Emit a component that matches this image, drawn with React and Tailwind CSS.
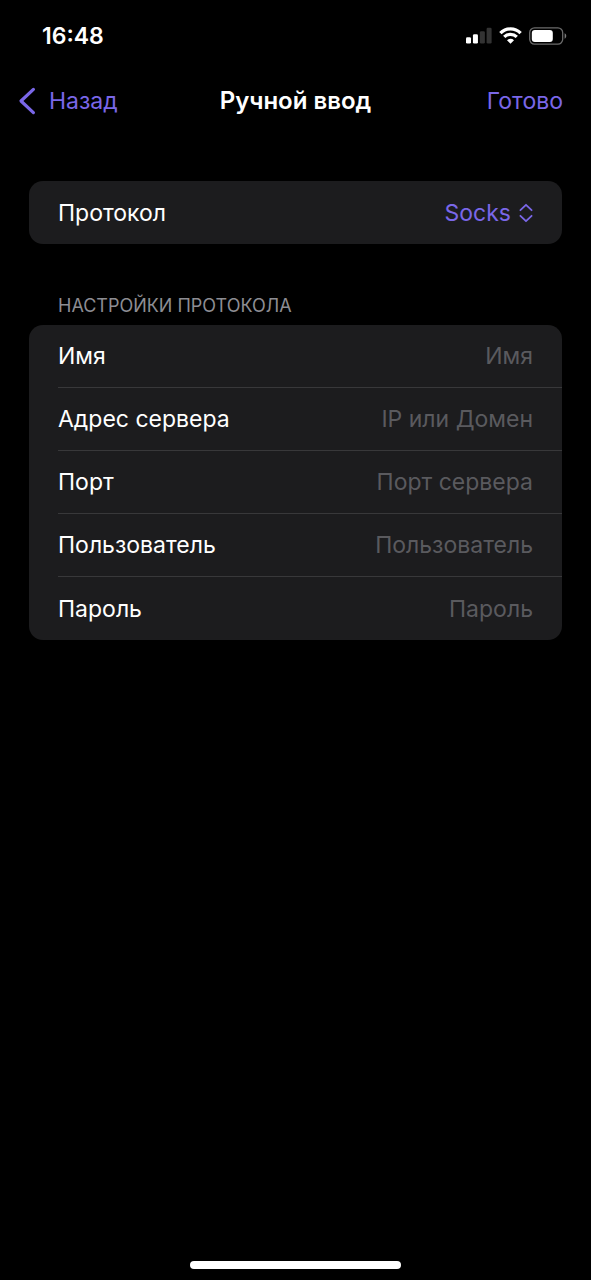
const FIELDS = [
    { id: "name", label: "Имя", placeholder: "Имя", type: "text" },
    { id: "host", label: "Адрес сервера", placeholder: "IP или Домен", type: "text" },
    { id: "port", label: "Порт", placeholder: "Порт сервера", type: "text" },
    { id: "user", label: "Пользователь", placeholder: "Пользователь", type: "text" },
    { id: "password", label: "Пароль", placeholder: "Пароль", type: "password" },
];

function StatusBar() {
    return (
        <div className="flex items-center justify-between h-[71px] pl-[42px] pr-6">
            <time className="text-[23px] leading-7 font-semibold">16:48</time>
            <div className="flex items-center gap-[7px]">
                <svg width="26" height="17" viewBox="0 0 27 17" fill="#fff" aria-hidden="true">
                    <rect x="0" y="10.2" width="5.2" height="6.6" rx="1.4" />
                    <rect x="7.2" y="7.2" width="5.2" height="9.6" rx="1.4" />
                    <rect x="14.4" y="4" width="5.2" height="12.8" rx="1.4" fill="#333" />
                    <rect x="21.4" y="0.4" width="5.2" height="16.4" rx="1.4" fill="#333" />
                </svg>
                <svg width="23" height="17" viewBox="0 0 23 17" fill="none" stroke="#fff" aria-hidden="true">
                    <path d="M1.4 6.1C7 .5 16 .5 21.6 6.1" strokeWidth="3.4" />
                    <path d="M5.2 9.9C8.7 6.5 14.3 6.5 17.8 9.9" strokeWidth="3.2" />
                    <path d="M11.5 16.8L8 13.2C10 11.4 13 11.4 15 13.2Z" fill="#fff" stroke="none" />
                </svg>
                <svg width="38" height="18" viewBox="0 0 38 18" fill="none" aria-hidden="true">
                    <rect x="0.7" y="0.9" width="33" height="16.2" rx="4.8" stroke="#6b6b6b" strokeWidth="1.3" />
                    <rect x="2.8" y="3" width="21" height="12" rx="3" fill="#fff" />
                    <path d="M35.6 6.3C37.8 7.2 37.8 10.8 35.6 11.7Z" fill="#7a7a7a" />
                </svg>
            </div>
        </div>
    );
}

function NavBar() {
    return (
        <header className="grid grid-cols-[1fr_auto_1fr] items-center h-[60px] px-7 text-[23px] leading-8">
            <button type="button" className="flex items-center gap-[13px] justify-self-start -ml-2.5 text-[#7a67e8]">
                <svg width="18" height="28" viewBox="0 0 18 28" fill="none" stroke="currentColor" strokeWidth="3.2" strokeLinecap="round" strokeLinejoin="round" aria-hidden="true">
                    <path d="M15.4 2.4L3 14L15.4 25.6" />
                </svg>
                Назад
            </button>
            <h1 className="text-2xl font-semibold">Ручной ввод</h1>
            <button type="button" className="justify-self-end text-[#7a67e8]">
                Готово
            </button>
        </header>
    );
}

function ProtocolPicker() {
    return (
        <div className="flex items-center h-[63px] px-[29px] rounded-[14px] bg-[#1c1c1e]">
            <label htmlFor="protocol" className="flex-1">
                Протокол
            </label>
            <select id="protocol" defaultValue="socks" className="appearance-none [field-sizing:content] bg-transparent text-[#7a67e8] outline-none">
                <option value="socks">Socks</option>
            </select>
            <svg className="ml-2 text-[#7a67e8] pointer-events-none" width="14" height="20" viewBox="0 0 14 20" fill="none" stroke="currentColor" strokeWidth="1.8" strokeLinecap="round" strokeLinejoin="round" aria-hidden="true">
                <path d="M1.4 7.2L7 1.8L12.6 7.2M1.4 12.8L7 18.2L12.6 12.8" />
            </svg>
        </div>
    );
}

function FieldRow({ id, label, placeholder, type }) {
    return (
        <div className="flex items-center h-[63px] pr-[29px] border-b border-[#38383a] last:border-b-0">
            <label htmlFor={id} className="shrink-0">
                {label}
            </label>
            <input
                id={id}
                type={type}
                placeholder={placeholder}
                className="flex-1 min-w-0 bg-transparent text-right outline-none placeholder:text-[#5a5a5e]"
            />
        </div>
    );
}

export default function App() {
    return (
        <div className="flex flex-col min-h-screen bg-black text-white font-['Inter','Liberation_Sans',sans-serif]">
            <StatusBar />
            <NavBar />

            <main className="flex-1 px-[29px] pt-[50px] text-[23px] leading-8">
                <ProtocolPicker />

                <h2 className="mt-[50px] pl-[29px] pb-[7px] text-lg leading-6 text-[#8d8d93]">НАСТРОЙКИ ПРОТОКОЛА</h2>
                <div className="pl-[29px] rounded-[14px] bg-[#1c1c1e]">
                    {FIELDS.map((field) => (
                        <FieldRow key={field.id} {...field} />
                    ))}
                </div>
            </main>

            <footer className="flex justify-center pb-[11px]">
                <div className="w-[211px] h-2 rounded-full bg-white" />
            </footer>
        </div>
    );
}
